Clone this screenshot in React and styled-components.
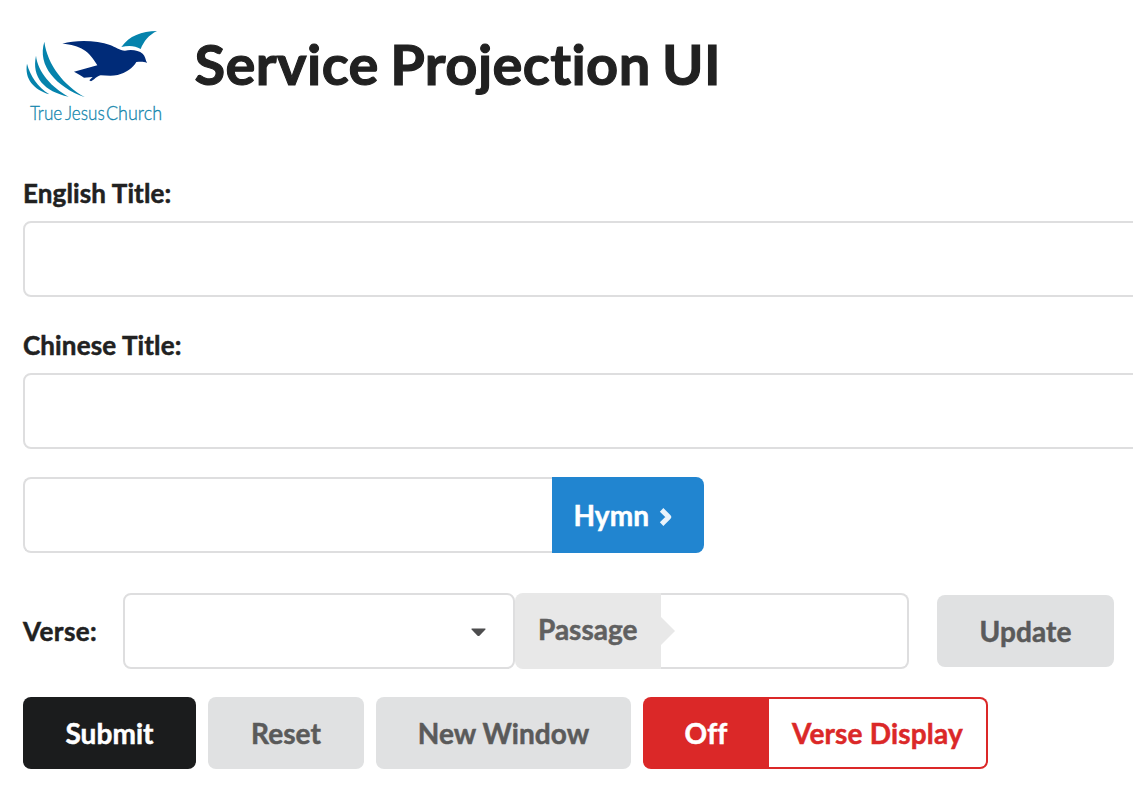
import React from 'react';
import styled, { createGlobalStyle } from 'styled-components';

const GlobalStyle = createGlobalStyle`
  *, *::before, *::after { box-sizing: border-box; }
  html, body { margin: 0; background: #fff; }
  body {
    overflow: hidden;
    color: #212121;
    font-family: Lato, 'Liberation Sans', sans-serif;
    font-size: 28px;
    font-variant-ligatures: none;
    -webkit-text-stroke: 0.5px currentColor;
  }
  input, button { font: inherit; color: inherit; outline: none; }
`;

const Page = styled.main`
  width: 1180px;
  height: 787px;
  overflow: hidden;
`;

const Header = styled.header`
  display: flex;
  align-items: flex-start;
  height: 179px;
  padding: 15px 0 0 10px;
`;

const Logo = styled.svg`
  width: 170px;
  height: 120px;
  flex: none;
  -webkit-text-stroke: 0;
`;

const Heading = styled.h1`
  margin: 13px 0 0 14.5px;
  font-size: 56px;
  line-height: 72px;
  font-weight: 700;
  letter-spacing: 0.4px;
  word-spacing: -2.7px;
  white-space: nowrap;
  -webkit-text-stroke-width: 1.1px;
`;

const Form = styled.form`
  padding-left: 23px;
`;

const Field = styled.div`
  margin-bottom: ${(p) => p.$gap}px;
`;

const Label = styled.label`
  display: block;
  margin: -1px 0 13px;
  font-size: 26px;
  line-height: 30px;
  font-weight: 700;
  letter-spacing: 0.13px;
`;

const InlineLabel = styled(Label)`
  width: 100px;
  margin: 0 0 1px;
  letter-spacing: 0.45px;
`;

const Input = styled.input`
  display: block;
  width: ${(p) => p.$width || '100%'};
  height: 76px;
  padding: 0 28px;
  border: 2px solid #dededf;
  border-radius: 8px;
  background: #fff;
  ${(p) => p.$join === 'right' && 'border-right: 0; border-radius: 8px 0 0 8px;'}
  ${(p) => p.$join === 'left' && 'border-left: 0; border-radius: 0 8px 8px 0;'}
`;

const Row = styled.div`
  display: flex;
  align-items: center;
  margin-bottom: ${(p) => p.$gap || 0}px;
`;

const tones = {
  grey: ['#e0e1e2', '#5a5a5a'],
  black: ['#1b1c1d', '#fff'],
  blue: ['#2185d0', '#fff'],
  red: ['#db2828', '#fff'],
};

const Button = styled.button`
  display: flex;
  align-items: center;
  justify-content: center;
  width: ${(p) => p.$width}px;
  height: ${(p) => p.$height || 72}px;
  margin: 0 ${(p) => p.$gap || 0}px 0 0;
  padding: 0 0 1px;
  border: 0;
  border-radius: ${(p) => p.$radius || '8px'};
  background: ${(p) => tones[p.$tone][0]};
  color: ${(p) => tones[p.$tone][1]};
  font-weight: 700;
  line-height: 28px;
  letter-spacing: 0.08px;
  white-space: nowrap;
`;

const HymnButton = styled(Button)`
  justify-content: flex-start;
  padding: 0 0 1px 21.5px;
`;

const UpdateButton = styled(Button)`
  margin-left: 28px;
`;

const Chevron = styled.svg`
  width: 14px;
  height: 20px;
  margin: 4px 0 0 10px;
`;

const Select = styled.div`
  display: flex;
  align-items: center;
  justify-content: flex-end;
  width: 392px;
  height: 76px;
  padding: 3px 27px 0 0;
  border: 2px solid #dededf;
  border-radius: 8px;
`;

const Caret = styled.svg`
  width: 15px;
  height: 9px;
`;

const PassageLabel = styled.div`
  position: relative;
  width: 146px;
  height: 76px;
  padding-left: 23px;
  border-radius: 8px 0 0 8px;
  background: #e8e8e8;
  color: #606060;
  font-weight: 700;
  line-height: 73px;

  &::after {
    content: '';
    position: absolute;
    left: 100%;
    top: 24px;
    border: solid transparent;
    border-width: 14px 0 14px 14px;
    border-left-color: #e8e8e8;
  }
`;

const OutlineLabel = styled.div`
  width: 219px;
  height: 72px;
  padding-left: 23px;
  border: 2px solid #db2828;
  border-left: 0;
  border-radius: 0 8px 8px 0;
  color: #db2828;
  font-weight: 700;
  line-height: 69px;
  letter-spacing: 0.18px;
  white-space: nowrap;
`;

function ChurchLogo() {
  return (
    <Logo viewBox="0 0 510 360" role="img" aria-label="True Jesus Church">
      <g fill="#0583ac">
        <path d="M51 146C61 184 83 216 118 238C71 223 43 192 51 146Z" />
        <path d="M78 122C83 171 126 218 176 245C103 229 64 187 78 122Z" />
        <path d="M103 80C113 151 161 210 225 247C138 215 81 152 103 80Z" />
        <path d="M334 96C358 63 394 48 441 48C416 60 402 78 392 102C375 91 354 91 334 96Z" />
      </g>
      <path
        fill="#002b78"
        d="M157 86C199 74 261 76 300 90C316 96 329 106 345 107C365 103 386 106 398 116C406 123 406 134 411 144C399 139 391 141 379 141C369 159 347 174 323 180C304 184 287 181 272 181C258 185 254 194 243 199L238 196L248 186L222 188C214 182 203 176 192 170L262 151C238 108 211 90 157 86Z"
      />
      <g fill="#1286ad" stroke="#1286ad" strokeWidth="0.9" fontSize="58" fontWeight="300">
        <text x="60" y="315" textLength="97" lengthAdjust="spacingAndGlyphs">True</text>
        <text x="165" y="315" textLength="119" lengthAdjust="spacingAndGlyphs">Jesus</text>
        <text x="288" y="315" textLength="168" lengthAdjust="spacingAndGlyphs">Church</text>
      </g>
    </Logo>
  );
}

export default function App() {
  return (
    <>
      <GlobalStyle />
      <Page>
        <Header>
          <ChurchLogo />
          <Heading>Service Projection UI</Heading>
        </Header>
        <Form onSubmit={(e) => e.preventDefault()}>
          <Field $gap={34}>
            <Label htmlFor="english">English Title:</Label>
            <Input id="english" />
          </Field>
          <Field $gap={28}>
            <Label htmlFor="chinese">Chinese Title:</Label>
            <Input id="chinese" />
          </Field>
          <Row $gap={40}>
            <Input $width="529px" $join="right" aria-label="Hymn number" />
            <HymnButton type="button" $tone="blue" $width={152} $height={76} $radius="0 8px 8px 0">
              Hymn
              <Chevron viewBox="0 0 14 20" fill="none" stroke="#e9f3fb" strokeWidth="5" strokeLinejoin="round">
                <path d="M2.6 2.9L9.8 10L2.6 17.1" />
              </Chevron>
            </HymnButton>
          </Row>
          <Row $gap={28}>
            <InlineLabel>Verse:</InlineLabel>
            <Select role="combobox" aria-label="Book">
              <Caret viewBox="0 0 15 9">
                <path d="M1 .5H14Q15.2 .7 14.2 1.8L8.7 7.5Q7.5 8.7 6.3 7.5L.8 1.8Q-.2 .7 1 .5Z" fill="#4d4d4e" />
              </Caret>
            </Select>
            <PassageLabel>Passage</PassageLabel>
            <Input $width="248px" $join="left" aria-label="Passage" />
            <UpdateButton type="button" $tone="grey" $width={177}>Update</UpdateButton>
          </Row>
          <Row>
            <Button type="submit" $tone="black" $width={173} $gap={12}>Submit</Button>
            <Button type="reset" $tone="grey" $width={156} $gap={12}>Reset</Button>
            <Button type="button" $tone="grey" $width={255} $gap={12}>New Window</Button>
            <Button type="button" $tone="red" $width={126} $radius="8px 0 0 8px">Off</Button>
            <OutlineLabel>Verse Display</OutlineLabel>
          </Row>
        </Form>
      </Page>
    </>
  );
}
